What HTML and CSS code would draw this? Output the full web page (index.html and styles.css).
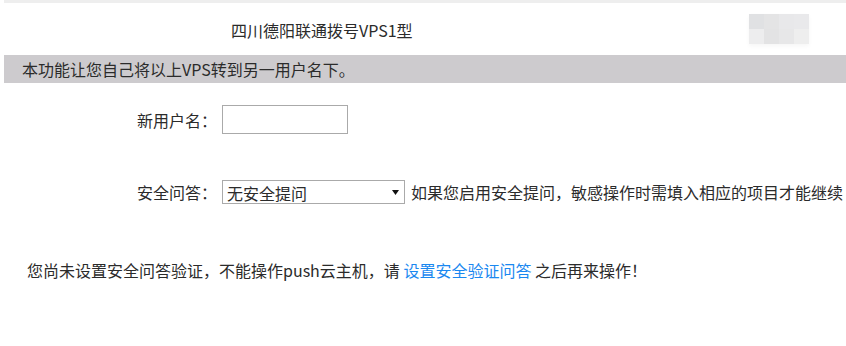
FILE: index.html
```html
<!DOCTYPE html>
<html lang="zh-CN">
<head>
    <meta charset="UTF-8">
    <title>VPS转移</title>
    <link rel="stylesheet" href="styles.css">
</head>
<body>
    <div class="page">
        <div class="top-strip"></div>

        <div class="header">
            <span class="vps-name">四川德阳联通拨号VPS1型</span>
            <div class="thumb">
                <span></span><span></span><span></span><span></span>
                <span></span><span></span><span></span><span></span>
            </div>
        </div>

        <div class="notice">本功能让您自己将以上VPS转到另一用户名下。</div>

        <form class="transfer-form">
            <div class="form-row first">
                <label for="newuser">新用户名：</label>
                <input type="text" id="newuser" class="text-input">
            </div>

            <div class="form-row second">
                <label for="question">安全问答：</label>
                <select id="question" class="question-select">
                    <option>无安全提问</option>
                </select>
                <span class="hint">如果您启用安全提问，敏感操作时需填入相应的项目才能继续</span>
            </div>
        </form>

        <p class="warning">您尚未设置安全问答验证，不能操作push云主机，请 <a href="#">设置安全验证问答</a> 之后再来操作！</p>
    </div>
</body>
</html>
```

FILE: styles.css
```css
body {
    margin: 0;
    background: #fff;
    font-family: "Noto Sans CJK SC", "Microsoft YaHei", sans-serif;
    font-size: 16px;
    color: #2b2b2b;
    overflow: hidden;
}

.page {
    margin-left: 4px;
}

.top-strip {
    height: 3px;
    background: #eeeeee;
}

/* Header with VPS name */
.header {
    height: 52px;
    display: flex;
    align-items: center;
    padding-left: 227px;
}

.vps-name {
    margin-top: 1px;
}

.thumb {
    margin-left: auto;
    margin-right: 37px;
    display: grid;
    grid-template-columns: repeat(4, 15px);
    grid-template-rows: 15px 15px;
    box-shadow: 0 2px 4px rgba(0, 0, 0, 0.04);
}

.thumb span:nth-child(1) { background: #e0e1e3; }
.thumb span:nth-child(2) { background: #e4e4e5; }
.thumb span:nth-child(3) { background: #e8e8ea; }
.thumb span:nth-child(4) { background: #e9e9eb; }
.thumb span:nth-child(5) { background: #ededee; }
.thumb span:nth-child(6) { background: #e3e3e4; }
.thumb span:nth-child(7) { background: #e7e7e8; }
.thumb span:nth-child(8) { background: #eeeeee; }

/* Grey notice bar */
.notice {
    height: 28px;
    line-height: 28px;
    background: #cdcbce;
    padding-left: 18px;
}

/* Form */
.transfer-form {
    padding-left: 133px;
}

.form-row {
    display: flex;
    align-items: center;
    white-space: nowrap;
}

.form-row.first {
    margin-top: 22px;
}

.form-row.second {
    margin-top: 46px;
}

.form-row label {
    width: 85px;
}

.text-input {
    width: 126px;
    height: 29px;
    box-sizing: border-box;
    border: 1px solid #aaa;
    padding: 2px 4px;
    font-size: 15px;
    margin: 0;
}

.question-select {
    width: 183px;
    height: 24px;
    box-sizing: border-box;
    border: 1px solid #aaa;
    border-radius: 0;
    background: #fff url("data:image/svg+xml,%3Csvg xmlns='http://www.w3.org/2000/svg' width='7' height='5'%3E%3Cpath d='M0 0h7L3.5 5z' fill='%23111'/%3E%3C/svg%3E") no-repeat right 5px center;
    -webkit-appearance: none;
    appearance: none;
    font-family: inherit;
    font-size: 16px;
    color: #2b2b2b;
    padding: 0 0 0 4px;
    margin: 0;
}

.hint {
    margin-left: 6px;
}

.warning {
    margin: 54px 0 0 23px;
}

.warning a {
    color: #1a88f0;
    text-decoration: none;
}
```
